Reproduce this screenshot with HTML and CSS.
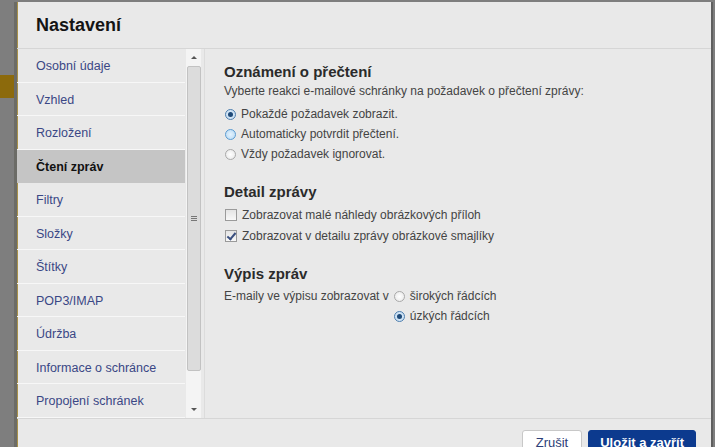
FILE: index.html
```html
<!DOCTYPE html>
<html lang="cs">
<head>
    <meta charset="UTF-8">
    <meta name="viewport" content="width=device-width, initial-scale=1.0">
    <title>Nastavení</title>
    <link rel="stylesheet" href="styles.css">
</head>
<body>
    <div class="page">
        <div class="backdrop">
            <div class="backdrop-bar"></div>
        </div>

        <div class="dialog">
            <div class="dialog-head">
                <h1 class="title">Nastavení</h1>
            </div>

            <div class="dialog-body">
                <div class="side">
                    <ul class="menu">
                        <li>Osobní údaje</li>
                        <li>Vzhled</li>
                        <li>Rozložení</li>
                        <li class="active">Čtení zpráv</li>
                        <li>Filtry</li>
                        <li>Složky</li>
                        <li>Štítky</li>
                        <li>POP3/IMAP</li>
                        <li>Údržba</li>
                        <li>Informace o schránce</li>
                        <li>Propojení schránek</li>
                    </ul>
                    <div class="scroll">
                        <span class="arrow up"></span>
                        <div class="thumb"><span class="grip"></span></div>
                        <span class="arrow down"></span>
                    </div>
                </div>

                <div class="content">
                    <h2>Oznámení o přečtení</h2>
                    <p class="desc">Vyberte reakci e-mailové schránky na požadavek o přečtení zprávy:</p>
                    <label class="opt"><span class="radio on"></span>Pokaždé požadavek zobrazit.</label>
                    <label class="opt"><span class="radio hover"></span>Automaticky potvrdit přečtení.</label>
                    <label class="opt"><span class="radio"></span>Vždy požadavek ignorovat.</label>

                    <h2>Detail zprávy</h2>
                    <label class="opt tall"><span class="check"></span>Zobrazovat malé náhledy obrázkových příloh</label>
                    <label class="opt tall"><span class="check on"></span>Zobrazovat v detailu zprávy obrázkové smajlíky</label>

                    <h2>Výpis zpráv</h2>
                    <div class="list-row">
                        <span class="list-label">E-maily ve výpisu zobrazovat v</span>
                        <div class="list-opts">
                            <label class="opt"><span class="radio"></span>širokých řádcích</label>
                            <label class="opt"><span class="radio on"></span>úzkých řádcích</label>
                        </div>
                    </div>
                </div>
            </div>

            <div class="dialog-foot">
                <button class="btn">Zrušit</button>
                <button class="btn primary">Uložit a zavřít</button>
            </div>
        </div>
    </div>
</body>
</html>
```

FILE: styles.css
```css
*{
    margin: 0;
    padding: 0;
    box-sizing: border-box;
}
body{
    background-color: #7e7e7e;
    font-family: "Liberation Sans", Arial, sans-serif;
    overflow: hidden;
}
.page{
    display: flex;
    height: 447px;
    padding-top: 2px;
    overflow: hidden;
}
.backdrop{
    width: 14px;
    flex-shrink: 0;
    padding-top: 73px;
}
.backdrop-bar{
    height: 23px;
    background-color: #8c6a0c;
}
.dialog{
    width: 699px;
    flex-shrink: 0;
    background-color: #e9e9e9;
    border-left: 3px solid #6b6b66;
    box-shadow: inset 1px 0 0 #a8914a;
    border-right: 2px solid #5f5f5f;
    display: flex;
    flex-direction: column;
}
.dialog-head{
    height: 47px;
    flex-shrink: 0;
    border-bottom: 1px solid #d6d6d6;
    padding: 13px 0 0 19px;
}
.title{
    font-size: 18px;
    font-weight: bold;
    color: #141414;
}
.dialog-body{
    height: 370px;
    flex-shrink: 0;
    display: flex;
    border-bottom: 1px solid #d6d6d6;
}
.side{
    display: flex;
    width: 185px;
}
.menu{
    list-style: none;
    width: 168px;
}
.menu li{
    height: 33.5px;
    line-height: 34px;
    padding-left: 19px;
    font-size: 12.5px;
    color: #3a4785;
    border-bottom: 1px solid #f7f7f7;
}
.menu li.active{
    background-color: #c5c5c5;
    color: #111;
    font-weight: bold;
    border-bottom-color: #c5c5c5;
}
.scroll{
    width: 15px;
    margin-left: 1px;
    background-color: #f4f4f4;
    display: flex;
    flex-direction: column;
    align-items: center;
}
.arrow{
    height: 17px;
    width: 100%;
    display: flex;
    justify-content: center;
    align-items: center;
}
.arrow::after{
    content: "";
    border-left: 3px solid transparent;
    border-right: 3px solid transparent;
}
.arrow.up::after{
    border-bottom: 3px solid #555;
}
.arrow.down::after{
    border-top: 3px solid #555;
}
.thumb{
    width: 14px;
    height: 305px;
    background-color: #dcdcdc;
    border: 1px solid #c2c2c2;
    border-radius: 2px;
    display: flex;
    justify-content: center;
    align-items: center;
}
.grip{
    width: 6px;
    height: 5px;
    border-top: 1px solid #777;
    border-bottom: 1px solid #777;
    position: relative;
}
.grip::after{
    content: "";
    position: absolute;
    left: 0;
    right: 0;
    top: 1px;
    border-top: 1px solid #777;
}
.scroll .arrow.down{
    margin-top: auto;
}
.content{
    flex: 1;
    margin-left: 2px;
    border-left: 1px solid #dcdcdc;
    padding: 14px 0 0 19px;
    color: #444;
    font-size: 12px;
}
.content h2{
    font-size: 15px;
    font-weight: bold;
    color: #2b2b2b;
    margin: 0 0 4px;
}
.desc{
    margin-bottom: 3px;
    height: 17px;
}
.opt{
    display: flex;
    align-items: center;
    height: 20px;
}
.opt.tall{
    height: 21px;
}
.opt + h2{
    margin-top: 19px;
}
.radio{
    width: 11px;
    height: 11px;
    border-radius: 50%;
    border: 1px solid #a9a9a9;
    background: radial-gradient(circle, #fff 0, #e6e6e6 100%);
    margin: 0 5px 0 1px;
    display: flex;
    justify-content: center;
    align-items: center;
}
.radio.on::after{
    content: "";
    width: 5px;
    height: 5px;
    border-radius: 50%;
    background-color: #1f4a78;
}
.radio.on{
    border-color: #4f7fae;
    background: #cfe3f5;
}
.radio.hover{
    border-color: #5b9bd1;
    background: radial-gradient(circle, #e4f3ff 0, #b6d8f2 100%);
}
.check{
    width: 12px;
    height: 12px;
    border: 1px solid #9a9a9a;
    background: linear-gradient(#e4e4e4, #f8f8f8);
    margin: 0 5px 0 1px;
    position: relative;
}
.check.on::after{
    content: "";
    position: absolute;
    left: 3px;
    top: 0;
    width: 3px;
    height: 7px;
    border-right: 2px solid #3a4f7f;
    border-bottom: 2px solid #3a4f7f;
    transform: rotate(40deg);
}
.list-row{
    display: flex;
    align-items: flex-start;
    margin-top: 2px;
}
.list-label{
    line-height: 20px;
    margin-right: 4px;
}
.dialog-foot{
    flex: 1;
    min-height: 0;
    overflow: hidden;
    display: flex;
    justify-content: flex-end;
    align-items: flex-start;
    padding: 11px 15px 0 0;
    gap: 6px;
}
.btn{
    font-family: "Liberation Sans", Arial, sans-serif;
    font-size: 13px;
    height: 30px;
    flex-shrink: 0;
    padding: 0 13px 6px;
    border: 1px solid #c8c8c8;
    border-radius: 3px;
    background-color: #fff;
    color: #2c3e78;
}
.btn.primary{
    background-color: #0c3a8e;
    border-color: #0c3a8e;
    color: #fff;
    font-weight: bold;
    padding: 0 11px 6px;
}
```
